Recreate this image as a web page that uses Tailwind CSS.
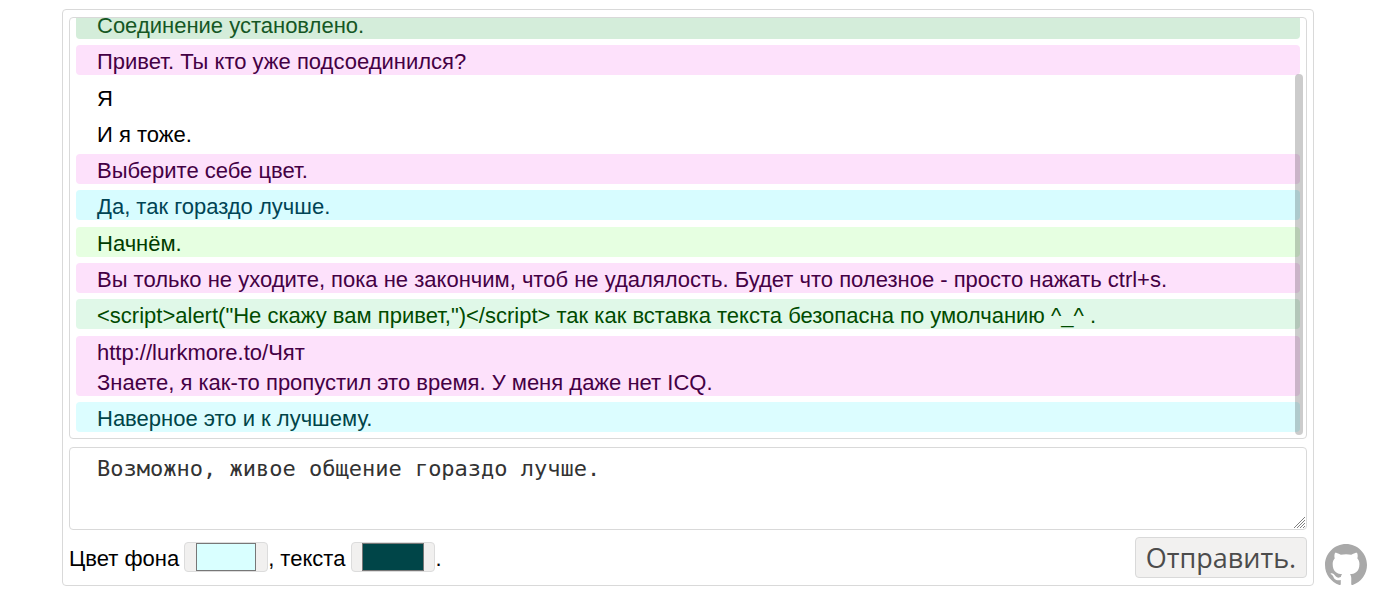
<!DOCTYPE html>
<html lang="ru">
<head>
<meta charset="utf-8">
<meta name="viewport" content="width=device-width, initial-scale=1">
<title>Чат</title>
<script src="https://cdn.jsdelivr.net/npm/@tailwindcss/browser@4"></script>
</head>
<body class="bg-white text-black text-[22px] leading-[30px] font-['Liberation_Sans',Arial,sans-serif]">
<main class="ml-[62px] mr-[61px] mt-[9px] flex flex-col rounded border border-[#d9d9d9] px-[6px] py-[7px]">
  <section aria-label="Сообщения" class="relative flex h-[422px] flex-col justify-end overflow-hidden rounded border border-[#d9d9d9] p-[6px]">
    <ul class="flex h-[423px] shrink-0 flex-col justify-between *:h-[30px] *:rounded *:px-[21px] *:pt-[2px]">
      <li class="bg-[#d4edda] text-[#155724]">Соединение установлено.</li>
      <li class="bg-[#fde1fb] text-[#440044]">Привет. Ты кто уже подсоединился?</li>
      <li>Я</li>
      <li>И я тоже.</li>
      <li class="bg-[#fde1fb] text-[#440044]">Выберите себе цвет.</li>
      <li class="bg-[#d7fcff] text-[#004455]">Да, так гораздо лучше.</li>
      <li class="bg-[#e6ffe1] text-[#003c00]">Начнём.</li>
      <li class="bg-[#fde1fb] text-[#440044]">Вы только не уходите, пока не закончим, чтоб не удалялость. Будет что полезное - просто нажать ctrl+s.</li>
      <li class="bg-[#e0f8e8] text-[#004b00]">&lt;script&gt;alert("Не скажу вам привет,")&lt;/script&gt; так как вставка текста безопасна по умолчанию ^_^ .</li>
      <li class="h-[60px]! bg-[#fde1fb] text-[#440044]">http://lurkmore.to/Чят<br>Знаете, я как-то пропустил это время. У меня даже нет ICQ.</li>
      <li class="bg-[#dcfdff] text-[#004448]">Наверное это и к лучшему.</li>
    </ul>
    <div class="absolute right-[3px] top-[56px] bottom-[3px] w-2 rounded-full bg-black/20"></div>
  </section>
  <form class="mt-2 flex flex-col">
    <div class="relative flex">
      <textarea aria-label="Сообщение" class="block h-[83px] w-full resize-none rounded border border-[#d9d9d9] px-[27px] py-[6px] text-[22px] leading-[30px] text-[#333] outline-none font-['DejaVu_Sans_Mono',monospace]">Возможно, живое общение гораздо лучше.</textarea>
      <svg class="pointer-events-none absolute bottom-[2px] right-[2px] h-[11px] w-[11px]" viewBox="0 0 11 11" fill="none" stroke="#808080" stroke-width="1" aria-hidden="true"><path d="M0 11 11 0M3 11 11 3M6 11 11 6M9 11 11 9"/></svg>
    </div>
    <div class="mt-[7px] flex items-start justify-between">
      <div class="flex h-[41px] items-start pt-[5px]">
        <label for="bg" class="pt-[2px]">Цвет фона</label>
        <input id="bg" type="color" value="#d9ffff" class="ml-[5px] h-[30px] w-[84px] rounded border border-[#dcdcdc] bg-[#f1f0ef] px-[11px] [&::-webkit-color-swatch-wrapper]:p-0 [&::-webkit-color-swatch]:border-[#777]">
        <label for="fg" class="whitespace-pre pt-[2px]">, текста </label>
        <input id="fg" type="color" value="#004548" class="h-[30px] w-[84px] rounded border border-[#dcdcdc] bg-[#f1f0ef] px-[10px] [&::-webkit-color-swatch-wrapper]:p-0 [&::-webkit-color-swatch]:border-[#777]">
        <span class="pt-[2px]">.</span>
      </div>
      <button type="submit" class="h-[41px] w-[172px] rounded border border-[#d9d9d9] bg-[#f2f1f0] text-center text-[27px] leading-[36px] text-[#4c4c4c] font-['Open_Sans',sans-serif]">Отправить.</button>
    </div>
  </form>
</main>
<a href="#" aria-label="GitHub" class="fixed right-2 top-[544px] block text-[#a9a9a9]">
  <svg class="h-[42px] w-[42px]" viewBox="0 0 16 16" fill="currentColor" aria-hidden="true"><path d="M8 0C3.58 0 0 3.58 0 8c0 3.54 2.29 6.53 5.47 7.59.4.07.55-.17.55-.38 0-.19-.01-.82-.01-1.49-2.01.37-2.53-.49-2.69-.94-.09-.23-.48-.94-.82-1.13-.28-.15-.68-.52-.01-.53.63-.01 1.08.58 1.23.82.72 1.21 1.87.87 2.33.66.07-.52.28-.87.51-1.07-1.78-.2-3.64-.89-3.64-3.95 0-.87.31-1.59.82-2.15-.08-.2-.36-1.02.08-2.12 0 0 .67-.21 2.2.82.64-.18 1.32-.27 2-.27s1.36.09 2 .27c1.53-1.04 2.2-.82 2.2-.82.44 1.1.16 1.92.08 2.12.51.56.82 1.27.82 2.15 0 3.07-1.87 3.75-3.65 3.95.29.25.54.73.54 1.48 0 1.07-.01 1.93-.01 2.2 0 .21.15.46.55.38A8.01 8.01 0 0 0 16 8c0-4.42-3.58-8-8-8z"/></svg>
</a>
</body>
</html>
